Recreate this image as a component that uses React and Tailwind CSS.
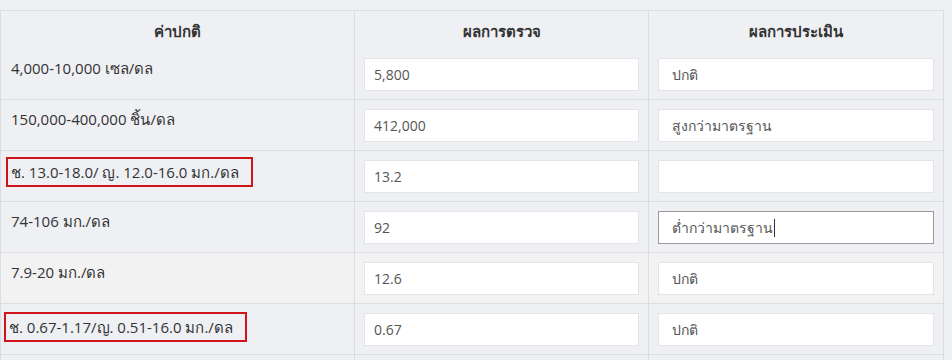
import React from 'react'

const rows = [
    { normal: '4,000-10,000 เซล/ดล', result: '5,800', assess: 'ปกติ' },
    { normal: '150,000-400,000 ชิ้น/ดล', result: '412,000', assess: 'สูงกว่ามาตรฐาน' },
    { normal: 'ช. 13.0-18.0/ ญ. 12.0-16.0 มก./ดล', result: '13.2', assess: '', boxed: 'a' },
    { normal: '74-106 มก./ดล', result: '92', assess: 'ต่ำกว่ามาตรฐาน', focused: true },
    { normal: '7.9-20 มก./ดล', result: '12.6', assess: 'ปกติ', light: true },
    { normal: 'ช. 0.67-1.17/ญ. 0.51-16.0 มก./ดล', result: '0.67', assess: 'ปกติ', boxed: 'b' },
]

const font = { fontFamily: '"Open Sans", "Noto Sans", Tahoma, sans-serif' }

const App = () => {
    return (
        <div className="w-[952px] h-[360px] overflow-hidden bg-[#eff0f4] pt-[10px] text-[14px] text-[#333]" style={font}>
            <table className="w-[943px] border-collapse table-fixed">
                <colgroup>
                    <col className="w-[354px]" />
                    <col className="w-[294px]" />
                    <col className="w-[295px]" />
                </colgroup>
                <thead>
                    <tr className="h-[38px]">
                        <th className="border border-[#dcdde2] border-b-0 text-center font-bold text-[15px] pt-[2px] pb-0 align-middle">ค่าปกติ</th>
                        <th className="border border-[#dcdde2] border-b-0 text-center font-bold text-[15px] pt-[2px] pb-0 align-middle">ผลการตรวจ</th>
                        <th className="border border-[#dcdde2] border-b-0 text-center font-bold text-[15px] pt-[2px] pb-0 align-middle">ผลการประเมิน</th>
                    </tr>
                </thead>
                <tbody>
                    {rows.map((row, index) => (
                        <tr key={index} className={"h-[51px] " + (row.light ? 'bg-[#f2f2f3]' : '')}>
                            <td className={"border border-[#dcdde2] align-top text-[15px] " + (index === 0 ? 'border-t-0' : '') + (row.boxed === 'a' ? ' pl-[5px] pt-[6px]' : row.boxed === 'b' ? ' pl-[3px] pt-[8px]' : ' pl-[10px] pt-[8px]')}>
                                {row.boxed ? (
                                    <span className="inline-block border-2 border-[#d0141a] pl-[3px] pr-[12px] leading-[26px]">{row.normal}</span>
                                ) : (
                                    <span className="leading-[20px]">{row.normal}</span>
                                )}
                            </td>
                            <td className={"border border-[#dcdde2] px-[9px] pt-[9px] pb-[8px] " + (index === 0 ? 'border-t-0' : '')}>
                                <div className="h-[33px] bg-white border border-[#e4e4e8] pl-[9px] flex items-center text-[#555]">{row.result}</div>
                            </td>
                            <td className={"border border-[#dcdde2] px-[9px] pt-[9px] pb-[8px] " + (index === 0 ? 'border-t-0' : '')}>
                                <div className={"h-[33px] bg-white border pl-[13px] flex items-center text-[#555] " + (row.focused ? 'border-[#9a9a9a]' : 'border-[#e4e4e8]')}>
                                    {row.assess}
                                    {row.focused && <span className="inline-block w-px h-[18px] bg-[#333] ml-px"></span>}
                                </div>
                            </td>
                        </tr>
                    ))}
                    <tr className="h-[20px]">
                        <td className="border border-[#dcdde2]"></td>
                        <td className="border border-[#dcdde2]"></td>
                        <td className="border border-[#dcdde2]"></td>
                    </tr>
                </tbody>
            </table>
        </div>
    )
}

export default App
